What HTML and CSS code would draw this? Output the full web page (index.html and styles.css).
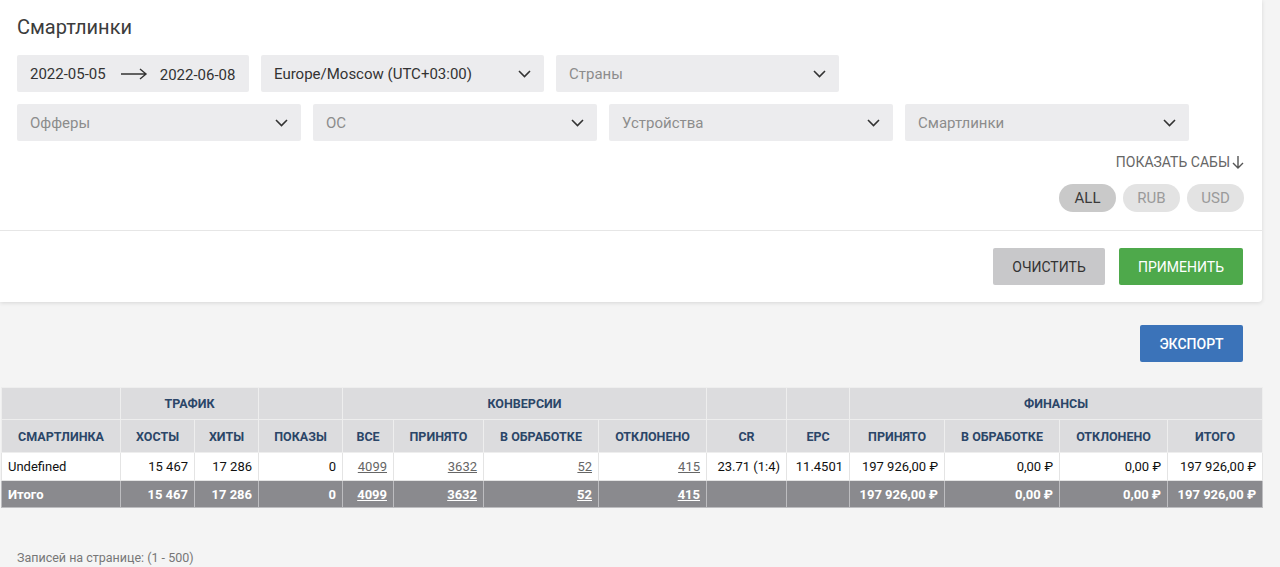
FILE: index.html
```html
<!DOCTYPE html>
<html lang="ru">
<head>
    <meta charset="UTF-8">
    <title>Смартлинки</title>
    <link rel="stylesheet" href="styles.css">
</head>
<body>
    <div class="page">
        <div class="card">
            <div class="card-body">
                <h2 class="title">Смартлинки</h2>
                <div class="filter-row">
                    <div class="date-range">
                        <span class="date-from">2022-05-05</span>
                        <svg class="date-arrow" width="28" height="12" viewBox="0 0 28 12"><path d="M1 6H26M20 1L26 6L20 11" fill="none" stroke="#333" stroke-width="1.4"/></svg>
                        <span class="date-to">2022-06-08</span>
                    </div>
                    <div class="select w283 filled">Europe/Moscow (UTC+03:00)<svg class="chev" width="13" height="8" viewBox="0 0 13 8"><path d="M1 1L6.5 6.5L12 1" fill="none" stroke="#333" stroke-width="1.6"/></svg></div>
                    <div class="select w283">Страны<svg class="chev" width="13" height="8" viewBox="0 0 13 8"><path d="M1 1L6.5 6.5L12 1" fill="none" stroke="#333" stroke-width="1.6"/></svg></div>
                </div>
                <div class="filter-row">
                    <div class="select w284">Офферы<svg class="chev" width="13" height="8" viewBox="0 0 13 8"><path d="M1 1L6.5 6.5L12 1" fill="none" stroke="#333" stroke-width="1.6"/></svg></div>
                    <div class="select w284">ОС<svg class="chev" width="13" height="8" viewBox="0 0 13 8"><path d="M1 1L6.5 6.5L12 1" fill="none" stroke="#333" stroke-width="1.6"/></svg></div>
                    <div class="select w284">Устройства<svg class="chev" width="13" height="8" viewBox="0 0 13 8"><path d="M1 1L6.5 6.5L12 1" fill="none" stroke="#333" stroke-width="1.6"/></svg></div>
                    <div class="select w284">Смартлинки<svg class="chev" width="13" height="8" viewBox="0 0 13 8"><path d="M1 1L6.5 6.5L12 1" fill="none" stroke="#333" stroke-width="1.6"/></svg></div>
                </div>
                <div class="subs-toggle">
                    <span>ПОКАЗАТЬ САБЫ</span>
                    <svg width="12" height="14" viewBox="0 0 12 14"><path d="M6 1V13M1 8L6 13L11 8" fill="none" stroke="#555" stroke-width="1.4"/></svg>
                </div>
                <div class="currency">
                    <span class="pill active">ALL</span>
                    <span class="pill">RUB</span>
                    <span class="pill">USD</span>
                </div>
            </div>
            <div class="card-footer">
                <button class="btn btn-clear">ОЧИСТИТЬ</button>
                <button class="btn btn-apply">ПРИМЕНИТЬ</button>
            </div>
        </div>

        <div class="export-bar">
            <button class="btn btn-export">ЭКСПОРТ</button>
        </div>

        <table class="stats">
            <colgroup>
                <col style="width:119px"><col style="width:74px"><col style="width:64px"><col style="width:84px">
                <col style="width:51px"><col style="width:90px"><col style="width:115px"><col style="width:108px">
                <col style="width:80px"><col style="width:63px"><col style="width:95px"><col style="width:115px">
                <col style="width:108px"><col style="width:95px">
            </colgroup>
            <thead>
                <tr class="group-row">
                    <th></th>
                    <th colspan="2">ТРАФИК</th>
                    <th></th>
                    <th colspan="4">КОНВЕРСИИ</th>
                    <th></th>
                    <th></th>
                    <th colspan="4">ФИНАНСЫ</th>
                </tr>
                <tr class="head-row">
                    <th>СМАРТЛИНКА</th>
                    <th>ХОСТЫ</th>
                    <th>ХИТЫ</th>
                    <th>ПОКАЗЫ</th>
                    <th>ВСЕ</th>
                    <th>ПРИНЯТО</th>
                    <th>В ОБРАБОТКЕ</th>
                    <th>ОТКЛОНЕНО</th>
                    <th>CR</th>
                    <th>EPC</th>
                    <th>ПРИНЯТО</th>
                    <th>В ОБРАБОТКЕ</th>
                    <th>ОТКЛОНЕНО</th>
                    <th>ИТОГО</th>
                </tr>
            </thead>
            <tbody>
                <tr class="data-row">
                    <td class="left">Undefined</td>
                    <td>15 467</td>
                    <td>17 286</td>
                    <td>0</td>
                    <td><a href="#">4099</a></td>
                    <td><a href="#">3632</a></td>
                    <td><a href="#">52</a></td>
                    <td><a href="#">415</a></td>
                    <td>23.71 (1:4)</td>
                    <td>11.4501</td>
                    <td>197 926,00 ₽</td>
                    <td>0,00 ₽</td>
                    <td>0,00 ₽</td>
                    <td>197 926,00 ₽</td>
                </tr>
                <tr class="total-row">
                    <td class="left">Итого</td>
                    <td>15 467</td>
                    <td>17 286</td>
                    <td>0</td>
                    <td><a href="#">4099</a></td>
                    <td><a href="#">3632</a></td>
                    <td><a href="#">52</a></td>
                    <td><a href="#">415</a></td>
                    <td></td>
                    <td></td>
                    <td>197 926,00 ₽</td>
                    <td>0,00 ₽</td>
                    <td>0,00 ₽</td>
                    <td>197 926,00 ₽</td>
                </tr>
            </tbody>
        </table>

        <div class="per-page">Записей на странице: (1 - 500)</div>
    </div>
</body>
</html>
```

FILE: styles.css
```css
body {
    margin: 0;
    font-family: Roboto, 'Liberation Sans', sans-serif;
    background: #f4f4f4;
    color: #222;
}

.page {
    width: 1262px;
}

.card {
    background: #fff;
    border-radius: 0 0 4px 0;
    box-shadow: 0 1px 4px rgba(0, 0, 0, 0.12);
}

.card-body {
    padding: 14px 18px 18px 17px;
}

.title {
    margin: 0 0 14px;
    font-size: 20px;
    font-weight: 400;
    color: #3c3c3c;
    line-height: 27px;
}

.filter-row {
    display: flex;
    gap: 12px;
    margin-bottom: 12px;
}

.date-range {
    width: 232px;
    height: 37px;
    display: flex;
    align-items: center;
    background: #ececee;
    border-radius: 2px;
    font-size: 15px;
    color: #333;
}

.date-from {
    padding-left: 13px;
}

.date-arrow {
    margin: 0 12px 0 14px;
}

.date-to {
    align-self: stretch;
    display: flex;
    align-items: center;
    margin-top: 2px;
}

.select {
    height: 37px;
    box-sizing: border-box;
    display: flex;
    align-items: center;
    justify-content: space-between;
    padding: 0 13px 0 13px;
    background: #ececee;
    border-radius: 2px;
    font-size: 15px;
    color: #8c8c8c;
}

.select.filled {
    color: #333;
}

.w283 {
    width: 283px;
}

.w284 {
    width: 284px;
}

.subs-toggle {
    display: flex;
    justify-content: flex-end;
    align-items: center;
    gap: 2px;
    margin-top: 13px;
    font-size: 14px;
    color: #666;
}

.currency {
    display: flex;
    justify-content: flex-end;
    gap: 7px;
    margin-top: 14px;
}

.pill {
    width: 57px;
    height: 28px;
    line-height: 28px;
    text-align: center;
    border-radius: 14px;
    background: #e3e3e3;
    color: #9a9a9a;
    font-size: 15px;
}

.pill.active {
    background: #c9c9c9;
    color: #3a3a3a;
}

.card-footer {
    border-top: 1px solid #e6e6e6;
    display: flex;
    justify-content: flex-end;
    gap: 14px;
    padding: 17px 19px 17px;
}

.btn {
    height: 37px;
    border: none;
    border-radius: 2px;
    font-family: Roboto, 'Liberation Sans', sans-serif;
    font-size: 14px;
    cursor: pointer;
}

.btn-clear {
    width: 112px;
    background: #c8c8ca;
    color: #333;
}

.btn-apply {
    width: 124px;
    background: #4ea94b;
    color: #fff;
}

.export-bar {
    display: flex;
    justify-content: flex-end;
    padding: 23px 19px 25px;
}

.btn-export {
    width: 103px;
    background: #3b73b9;
    color: #fff;
    font-weight: 500;
}

.stats {
    margin-left: 1px;
    width: 1261px;
    table-layout: fixed;
    border-collapse: collapse;
    font-size: 13px;
}

.stats th {
    background: #dcdcde;
    color: #2b4668;
    font-size: 12.5px;
    font-weight: 700;
    border: 1px solid #eeeeee;
    padding: 0 4px;
    white-space: nowrap;
}

.group-row th {
    height: 31px;
}

.head-row th {
    height: 32px;
}

.stats td {
    text-align: right;
    padding: 0 6px;
    border: 1px solid #e4e4e4;
    white-space: nowrap;
}

.stats td.left {
    text-align: left;
}

.data-row td {
    height: 27px;
    background: #fff;
    color: #111;
}

.data-row a {
    color: #666;
}

.total-row td {
    height: 26px;
    background: #8a8a8e;
    color: #fff;
    font-weight: 700;
    border-color: #bdbdc0;
}

.total-row a {
    color: #fff;
}

.per-page {
    margin-top: 42px;
    padding-left: 17px;
    font-size: 12.5px;
    color: #777;
}
```
